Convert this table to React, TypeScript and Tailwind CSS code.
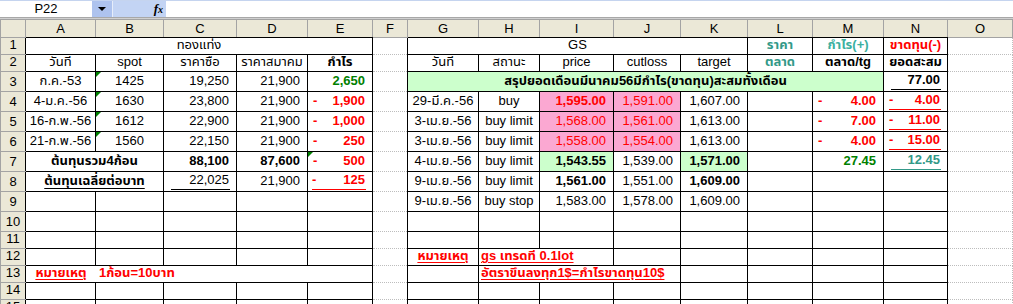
import React from "react";

const LETTERS = ["A", "B", "C", "D", "E", "F", "G", "H", "I", "J", "K", "L", "M", "N", "O"];

type CellProps = {
  children?: React.ReactNode;
  b?: boolean;
  span?: number;
  className?: string;
  tri?: boolean;
};

function C({ children, b = true, span, className = "", tri }: CellProps) {
  return (
    <td
      colSpan={span}
      className={`${
        b ? "border border-solid border-black" : "border border-dotted border-[#bdbdbd]"
      } relative p-0 align-bottom whitespace-nowrap overflow-hidden ${className}`}
    >
      {tri && (
        <span className="absolute left-0 top-0 w-0 h-0 border-t-[5px] border-r-[5px] border-t-[#008000] border-r-transparent" />
      )}
      {children}
    </td>
  );
}

function RowHead({ n }: { n: number }) {
  return (
    <th className="border border-solid border-y-[#a3a3a3] border-l-[#a3a3a3] border-r-black bg-[#ebe8d7] font-normal text-center align-bottom p-0 pb-[2px] leading-[14px]">
      {n}
    </th>
  );
}

const tall = "h-[20px]";
const short = "h-[17px]";
const R = "text-right pr-[7px] pb-[3px]";
const RS = "text-right pr-[7px] pb-[2px]";
const CT = "text-center pb-[3px]";
const CS = "text-center pb-[2px]";

function Neg({ v, cls = "" }: { v: string; cls?: string }) {
  return (
    <div className={`flex justify-between pl-[5px] pr-[7px] pb-[3px] font-bold text-[#ff0000] ${cls}`}>
      <span>-</span>
      <span>{v}</span>
    </div>
  );
}

function NegU({ v, ml = "ml-[5px]" }: { v: string; ml?: string }) {
  return (
    <div className="pb-[1px]">
      <div className={`flex justify-between ${ml} mr-[6px] pb-[2px] border-b border-[#ff0000] font-bold text-[#ff0000]`}>
        <span>-</span>
        <span className="pr-px">{v}</span>
      </div>
    </div>
  );
}

function Empty({ n, from = 0 }: { n: number; from?: number }) {
  return <>{Array.from({ length: n }).map((_, i) => <C key={i + from} />)}</>;
}

function LeftEmpty() {
  return <Empty n={5} />;
}

function F() {
  return <C b={false} />;
}

function O() {
  return <C b={false} />;
}

export default function App() {
  const cols = [25, 70, 68, 73, 71, 65, 35, 71, 61, 74, 67, 67, 65, 71, 64, 65];
  return (
    <div className="w-[1013px] h-[304px] overflow-hidden bg-white text-[13px] leading-[14px] text-black font-['Liberation_Sans','Noto_Sans_Thai','Tahoma',sans-serif]">
      {/* formula bar */}
      <div className="flex h-[17px] border-t border-[#c5d4ef] bg-white">
        <div className="w-[92px] text-center leading-[16px]">P22</div>
        <div className="w-[20px] bg-[#aec3ee] flex items-center justify-center">
          <span className="w-0 h-0 border-l-[4px] border-r-[4px] border-t-[4px] border-l-transparent border-r-transparent border-t-black" />
        </div>
        <div className="w-px bg-[#e6edfa]" />
        <div className="w-[53px] bg-[#c3d4f4] flex items-center justify-end pr-[3px]">
          <span className="italic font-['Liberation_Serif',serif] font-bold text-[13px] leading-[14px]">
            f<span className="text-[10px]">x</span>
          </span>
        </div>
        <div className="flex-1 bg-white" />
      </div>
      <div className="h-[2px] bg-[#a8a8a8] border-b border-[#d0d0d0]" />

      <table className="table-fixed border-collapse w-[1012px]">
        <colgroup>
          {cols.map((w, i) => (
            <col key={i} style={{ width: w }} />
          ))}
        </colgroup>
        <tbody>
          <tr className="h-[18px]">
            <th className="border border-solid border-[#a3a3a3] bg-[#ebe8d7] p-0" />
            {LETTERS.map((l) => (
              <th
                key={l}
                className={`border border-solid border-t-[#a3a3a3] border-x-[#a3a3a3] ${
                  l === "F" || l === "O" ? "border-b-[#a3a3a3]" : "border-b-black"
                } bg-[#ebe8d7] font-normal text-center align-bottom p-0 pb-[1px] leading-[15px]`}
              >
                {l}
              </th>
            ))}
          </tr>

          {/* Row 1 */}
          <tr className={short}>
            <RowHead n={1} />
            <C span={5} className={CS}>ทองแท่ง</C>
            <F />
            <C span={5} className={CS}>GS</C>
            <C className={`${CS} font-bold text-[#339988]`}>ราคา</C>
            <C className={`${CS} font-bold text-[#3bb0a0]`}>กำไร(+)</C>
            <C className={`${CS} font-bold text-[#ff0000]`}>ขาดทุน(-)</C>
            <O />
          </tr>

          {/* Row 2 */}
          <tr className={short}>
            <RowHead n={2} />
            <C className={CS}>วันที่</C>
            <C className={CS}>spot</C>
            <C className={CS}>ราคาซื้อ</C>
            <C className={CS}>ราคาสมาคม</C>
            <C className={`${CS} font-bold`}>กำไร</C>
            <F />
            <C className={CS}>วันที่</C>
            <C className={CS}>สถานะ</C>
            <C className={CS}>price</C>
            <C className={CS}>cutloss</C>
            <C className={CS}>target</C>
            <C className={`${CS} font-bold text-[#339988]`}>ตลาด</C>
            <C className={`${CS} font-bold`}>ตลาด/tg</C>
            <C className={`${CS} font-bold`}>ยอดสะสม</C>
            <O />
          </tr>

          {/* Row 3 */}
          <tr className={tall}>
            <RowHead n={3} />
            <C className={CT}>ก.ค.-53</C>
            <C className={CT} tri>1425</C>
            <C className={R}>19,250</C>
            <C className={R}>21,900</C>
            <C className={`${R} font-bold text-[#008000]`}>2,650</C>
            <F />
            <C span={7} className={`${CT} font-bold bg-[#ccffcc]`}>
              สรุปยอดเดือนมีนาคม56มีกำไร(ขาดทุน)สะสมทั้งเดือน
            </C>
            <C>
              <div className="pb-[1px]">
                <div className="text-right ml-[7px] mr-[6px] pb-[2px] border-b border-black font-bold">
                  <span className="pr-px">77.00</span>
                </div>
              </div>
            </C>
            <O />
          </tr>

          {/* Row 4 */}
          <tr className={tall}>
            <RowHead n={4} />
            <C className={CT}>4-ม.ค.-56</C>
            <C className={CT} tri>1630</C>
            <C className={R}>23,800</C>
            <C className={R}>21,900</C>
            <C><Neg v="1,900" /></C>
            <F />
            <C className={CT}>29-มี.ค.-56</C>
            <C className={CT}>buy</C>
            <C className={`${R} font-bold text-[#ff0000] bg-[#fba8d2]`}>1,595.00</C>
            <C className={`${R} text-[#ff0000] bg-[#fba8d2]`}>1,591.00</C>
            <C className={R}>1,607.00</C>
            <C />
            <C><Neg v="4.00" /></C>
            <C><NegU v="4.00" /></C>
            <O />
          </tr>

          {/* Row 5 */}
          <tr className={tall}>
            <RowHead n={5} />
            <C className={CT}>16-ก.พ.-56</C>
            <C className={CT} tri>1612</C>
            <C className={R}>22,900</C>
            <C className={R}>21,900</C>
            <C><Neg v="1,000" /></C>
            <F />
            <C className={CT}>3-เม.ย.-56</C>
            <C className={CT}>buy limit</C>
            <C className={`${R} text-[#ff0000] bg-[#fba8d2]`}>1,568.00</C>
            <C className={`${R} text-[#ff0000] bg-[#fba8d2]`}>1,561.00</C>
            <C className={R}>1,613.00</C>
            <C />
            <C><Neg v="7.00" /></C>
            <C><NegU v="11.00" /></C>
            <O />
          </tr>

          {/* Row 6 */}
          <tr className={tall}>
            <RowHead n={6} />
            <C className={CT}>21-ก.พ.-56</C>
            <C className={CT} tri>1560</C>
            <C className={R}>22,150</C>
            <C className={R}>21,900</C>
            <C><Neg v="250" /></C>
            <F />
            <C className={CT}>3-เม.ย.-56</C>
            <C className={CT}>buy limit</C>
            <C className={`${R} text-[#ff0000] bg-[#fba8d2]`}>1,558.00</C>
            <C className={`${R} text-[#ff0000] bg-[#fba8d2]`}>1,554.00</C>
            <C className={R}>1,613.00</C>
            <C />
            <C><Neg v="4.00" /></C>
            <C><NegU v="15.00" /></C>
            <O />
          </tr>

          {/* Row 7 */}
          <tr className={tall}>
            <RowHead n={7} />
            <C span={2} className={`${CT} font-bold`}>ต้นทุนรวม4ก้อน</C>
            <C className={`${R} font-bold`}>88,100</C>
            <C className={`${R} font-bold`}>87,600</C>
            <C tri><Neg v="500" /></C>
            <F />
            <C className={CT}>4-เม.ย.-56</C>
            <C className={CT}>buy limit</C>
            <C className={`${R} font-bold bg-[#ccffcc]`}>1,543.55</C>
            <C className={R}>1,539.00</C>
            <C className={`${R} font-bold bg-[#ccffcc]`}>1,571.00</C>
            <C />
            <C className={`${R} font-bold text-[#008000]`}>27.45</C>
            <C>
              <div className="pb-[1px]">
                <div className="text-right ml-[7px] mr-[6px] pb-[2px] border-b border-[#339988] font-bold text-[#339988]">
                  <span className="pr-px">12.45</span>
                </div>
              </div>
            </C>
            <O />
          </tr>

          {/* Row 8 */}
          <tr className={tall}>
            <RowHead n={8} />
            <C span={2} className={`${CT} font-bold`}>
              <span className="underline underline-offset-[3px]">ต้นทุนเฉลี่ยต่อบาท</span>
            </C>
            <C>
              <div className="pb-[1px]">
                <div className="text-right ml-[7px] mr-[6px] pb-[2px] border-b border-black">
                  <span className="pr-px">22,025</span>
                </div>
              </div>
            </C>
            <C className={R}>21,900</C>
            <C><NegU v="125" ml="ml-[4px]" /></C>
            <F />
            <C className={CT}>9-เม.ย.-56</C>
            <C className={CT}>buy limit</C>
            <C className={`${R} font-bold`}>1,561.00</C>
            <C className={R}>1,551.00</C>
            <C className={`${R} font-bold`}>1,609.00</C>
            <C />
            <C />
            <C />
            <O />
          </tr>

          {/* Row 9 */}
          <tr className={tall}>
            <RowHead n={9} />
            <LeftEmpty />
            <F />
            <C className={CT}>9-เม.ย.-56</C>
            <C className={CT}>buy stop</C>
            <C className={R}>1,583.00</C>
            <C className={R}>1,578.00</C>
            <C className={R}>1,609.00</C>
            <C />
            <C />
            <C />
            <O />
          </tr>

          {/* Row 10 */}
          <tr className={tall}>
            <RowHead n={10} />
            <LeftEmpty />
            <F />
            <Empty n={8} />
            <O />
          </tr>

          {/* Row 11 */}
          <tr className={short}>
            <RowHead n={11} />
            <LeftEmpty />
            <F />
            <Empty n={8} />
            <O />
          </tr>

          {/* Row 12 */}
          <tr className={short}>
            <RowHead n={12} />
            <LeftEmpty />
            <F />
            <C className={`${CS} font-bold text-[#ff0000]`}>
              <span className="underline underline-offset-[2px]">หมายเหตุ</span>
            </C>
            <C span={2} className="pl-[2px] pb-[2px] font-bold text-[#ff0000]">
              <span className="underline underline-offset-[2px]">gs เทรดที่ 0.1lot</span>
            </C>
            <Empty n={5} />
            <O />
          </tr>

          {/* Row 13 */}
          <tr className={short}>
            <RowHead n={13} />
            <C span={5} className="pb-[2px] font-bold text-[#ff0000]">
              <div className="flex">
                <div className="w-[70px] text-center">
                  <span className="underline underline-offset-[2px]">หมายเหตุ</span>
                </div>
                <div className="pl-[3px]">1ก้อน=10บาท</div>
              </div>
            </C>
            <F />
            <C />
            <C span={3} className="pl-[2px] pb-[2px] font-bold text-[#ff0000]">
              <span className="underline underline-offset-[2px]">อัตราขึ้นลงทุก1$=กำไรขาดทุน10$</span>
            </C>
            <Empty n={4} />
            <O />
          </tr>

          {/* Row 14 */}
          <tr className={short}>
            <RowHead n={14} />
            <LeftEmpty />
            <F />
            <Empty n={8} />
            <O />
          </tr>

          {/* Row 15 */}
          <tr className={short}>
            <RowHead n={15} />
            <LeftEmpty />
            <F />
            <Empty n={8} />
            <O />
          </tr>
        </tbody>
      </table>
    </div>
  );
}
